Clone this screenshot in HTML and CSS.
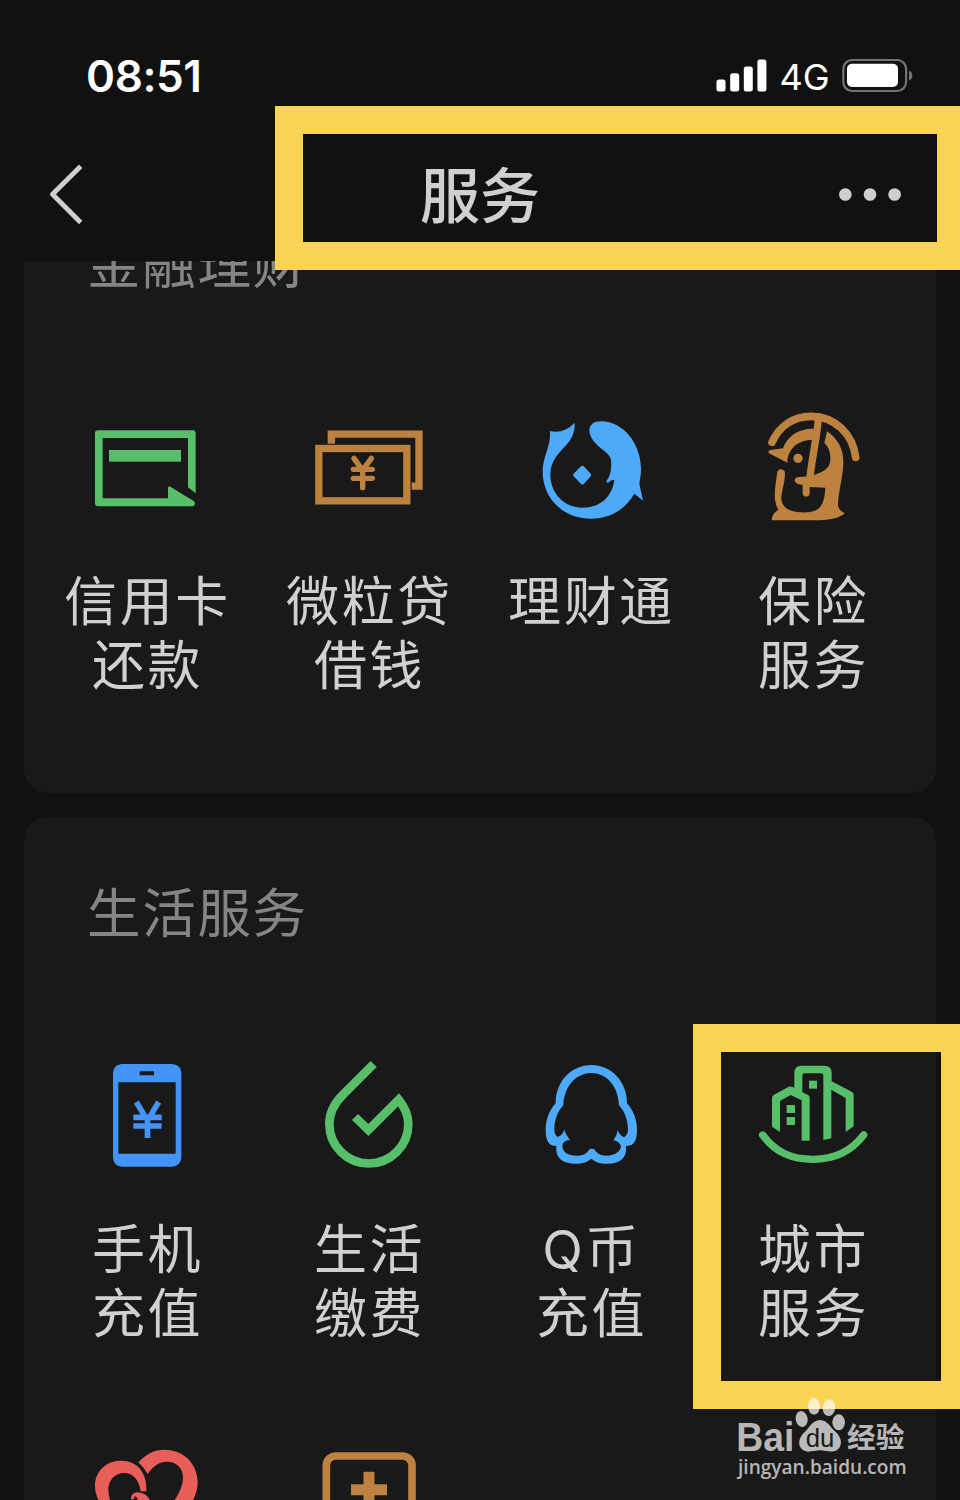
FILE: index.html
```html
<!DOCTYPE html>
<html lang="zh-CN">
<head>
    <meta charset="UTF-8">
    <meta name="viewport" content="width=device-width, initial-scale=1.0">
    <title>服务</title>
    <link rel="stylesheet" href="styles.css">
</head>
<body>
    <div class="screen">
        <header class="header">
            <div class="status-bar">
                <span class="time">08:51</span>
                <div class="status-icons">
                    <svg class="signal" viewBox="0 0 51 34" fill="#fff">
                        <rect x="0.5" y="20.5" width="9" height="12" rx="2.5"/>
                        <rect x="14.2" y="14.2" width="9" height="18.3" rx="2.5"/>
                        <rect x="27.8" y="7.4" width="9" height="25.1" rx="2.5"/>
                        <rect x="41.4" y="0.6" width="9" height="31.9" rx="2.5"/>
                    </svg>
                    <span class="network">4G</span>
                    <svg class="battery" viewBox="0 0 72 34">
                        <rect x="1.3" y="1" width="62.8" height="31" rx="9" fill="none" stroke="#737373" stroke-width="2.2"/>
                        <rect x="5" y="4.800" width="51" height="23.2" rx="5" fill="#fff"/>
                        <path d="M67 11.8Q70.3 13 70.3 16.5T67 21.8Z" fill="#737373"/>
                    </svg>
                </div>
            </div>
            <nav class="nav-bar">
                <svg class="back" viewBox="0 0 40 64">
                    <path d="M34.700 4.300L6.500 32.300L34.700 60.500" fill="none" stroke="#cfcfcf" stroke-width="4.8" stroke-linejoin="round"/>
                </svg>
                <h1>服务</h1>
                <svg class="more" viewBox="0 0 64 14" fill="#cfcfcf">
                    <circle cx="7.3" cy="7.500" r="6.3"/>
                    <circle cx="32" cy="7.500" r="6.3"/>
                    <circle cx="56.6" cy="7.500" r="6.3"/>
                </svg>
            </nav>
        </header>

        <main class="content">
            <section class="card card-finance">
                <h2>金融理财</h2>
                <div class="grid">
                    <div class="item">
                        <svg class="icon" viewBox="6 -30 390 390" fill="#57bf6a">
                            <path d="M54 61H339Q347 61 347 69V250L324 232V84H68V265H264V234Q264 226 271 230L341 273Q347 277 345 283Q343 289 337 289H54Q45 289 45 280V70Q45 61 54 61Z"/>
                            <rect x="87" y="120" width="216" height="35"/>
                        </svg>
                        <p>信用卡<br>还款</p>
                    </div>
                    <div class="item">
                        <svg class="icon" viewBox="672 -30 390 390" fill="none" stroke="#bd8140">
                            <rect x="716.5" y="115.5" width="264" height="157" stroke-width="22"/>
                            <path d="M754 101V72.5H1017V228.5H995" stroke-width="22"/>
                            <path d="M822 145L848 181L874 145M820 178H877M820 205H877M848 180V233" stroke-width="16" stroke-linecap="round"/>
                        </svg>
                        <p>微粒贷<br>借钱</p>
                    </div>
                    <div class="item">
                        <svg class="icon" viewBox="-12 0 390 390" fill="#4eaaf9">
                            <path d="M59 93Q103 102 134 68Q137 105 107 137C83 162 62 184 61 222C61 282 104 323 157 323C211 323 247 290 253 239Q243 239 233 249L229 244Q247 221 243 180Q240 166 224 154C195 133 178 111 178 91C178 74 192 64 214 64C278 64 333 130 333 207C333 224 330 239 328 251L339 302L313 281C286 328 241 356 183 356C103 356 38 300 38 214C38 168 66 130 59 93Z"/>
                            <path d="M157 197Q159 197 161 199L182 221Q185 225 182 229L161 252Q157 255 153 252L131 229Q127 225 131 221L153 199Q155 197 157 197Z"/>
                        </svg>
                        <p>理财通</p>
                    </div>
                    <div class="item">
                        <svg class="icon" viewBox="-6 0 390 390" fill="#bd8140">
                            <path d="M66 127C88 77 131 49 184 49C255 49 309 104 317 172" fill="none" stroke="#bd8140" stroke-width="23" stroke-linecap="round"/>
                            <path d="M205 58C201 110 187 166 179 240" fill="none" stroke="#bd8140" stroke-width="22"/>
                            <path d="M191 86C145 85 112 108 99 145L62 150Q52 153 57 160L112 188C113 147 143 120 188 119Z"/>
                            <circle cx="144" cy="175" r="14"/>
                            <path d="M231 94C264 116 281 149 280 188C279 230 266 270 264 312C264 329 275 333 284 340C278 349 246 361 209 361H65Q66 339 85 329C67 302 76 257 82 215Q85 207 94 208Q105 209 105 221C104 252 93 282 94 297C97 323 119 335 149 337C185 339 203 332 213 317C223 302 225 280 226 263L179 261V281Q177 290 168 290Q158 289 158 279V255L144 252Q134 248 134 241Q135 230 150 231L187 227C218 217 236 207 240 187C244 163 236 140 223 129Z"/>
                        </svg>
                        <p>保险<br>服务</p>
                    </div>
                </div>
            </section>

            <section class="card card-life">
                <h2>生活服务</h2>
                <div class="grid">
                    <div class="item">
                        <svg class="icon" viewBox="-24 0 390 390" fill="#4493f7">
                            <path fill-rule="evenodd" d="M95 42H247Q274 45 274 69V323Q272 347 247 350H95Q70 347 69 323V69Q70 45 95 42ZM149 64V76H192V64ZM85 97V311H257V97Z"/>
                            <path d="M139 156L167 203M206 156L178 203M130 202H215M130 228H215M172.500 198V264" fill="none" stroke="#4493f7" stroke-width="17"/>
                        </svg>
                        <p>手机<br>充值</p>
                    </div>
                    <div class="item">
                        <svg class="icon" viewBox="642 0 390 390" fill="none" stroke="#57bf6a" stroke-width="26">
                            <path d="M851 42L757 136C731 162 718 188 718 222A118.500 118.500 0 0 0 955 222C955 194 943 170 926 149L835 240L795 201"/>
                        </svg>
                        <p>生活<br>缴费</p>
                    </div>
                    <div class="item">
                        <svg class="icon" viewBox="-12 0 390 390" fill="#4eaaf9">
                            <path fill-rule="evenodd" d="M184 45C244 45 291 94 291 160C309 180 321 208 321 239C321 268 314 288 288 288C292 323 271 341 232 341C211 341 197 337 184 326C171 337 156 341 137 341C97 341 75 323 79 288C55 288 47 270 47 239C47 208 59 180 77 160C77 94 124 45 184 45ZM184 69C137 69 102 110 100 166C82 185 73 210 73 238C73 250 77 257 83 261Q99 256 103 238Q106 253 120 270Q99 271 97 287C98 306 113 317 141 317C161 317 171 310 178 298Q185 295 193 298C200 310 211 317 230 317C255 317 272 304 273 289Q269 274 250 270Q263 254 262 239Q268 255 282 262C291 257 294 248 294 238C294 209 283 183 267 166C265 110 231 69 184 69Z"/>
                        </svg>
                        <p>Q币<br>充值</p>
                    </div>
                    <div class="item">
                        <svg class="icon" viewBox="24 0 390 390" fill="#57bf6a">
                            <path d="M68 255C107 308 155 328 219 328C283 328 332 306 371 255" fill="none" stroke="#57bf6a" stroke-width="22" stroke-linecap="round"/>
                            <path d="M96 144Q96 137 102 134L145 111Q152 107 160 112L163 113V69Q163 47 184 47H253Q275 47 275 69V94L335 125Q341 128 341 135V229L317 246V144L274 119V265L250 270V77Q250 70 243 70H194Q187 70 187 77V127L203 134Q209 137 209 144V272H185V151L152 135L120 153V246L96 230Z"/>
                            <rect x="207" y="92" width="24" height="24"/>
                            <rect x="140" y="165" width="25" height="24"/>
                            <rect x="140" y="201" width="25" height="24"/>
                        </svg>
                        <p>城市<br>服务</p>
                    </div>
                    <div class="item">
                        <svg class="icon" viewBox="6 0 390 390" fill="#e85e59">
                            <path d="M175 97C198 72 222 59 254 59C311 59 353 101 353 157C353 229 278 285 199 330L188 303C250 255 309 199 309 142C309 113 288 95 262 95C237 95 219 108 203 132Q192 113 175 97Z"/>
                            <path d="M199 184H182C177 149 159 129 133 129C105 129 85 150 85 179Q85 195 91 211L199 330C112 285 45 230 45 167C45 123 79 92 123 92C174 92 202 130 199 184Z"/>
                            <path d="M153 208Q152 190 171 187C193 188 207 199 211 215L179 230L163 217L174 205L163 198V207Z"/>
                        </svg>
                    </div>
                    <div class="item">
                        <svg class="icon" viewBox="672 0 390 390" fill="none" stroke="#bd8140">
                            <rect x="739" y="78" width="257" height="257" rx="28" stroke-width="23"/>
                            <path d="M867 125V233M813 179H921" stroke-width="33"/>
                        </svg>
                    </div>
                </div>
            </section>
        </main>

        <div class="mark mark-title"></div>
        <div class="mark mark-city"></div>

        <svg class="watermark" viewBox="0 0 660 360">
            <g fill="#fff" fill-opacity="0.7">
                <text class="wm-bai" x="49" y="213" textLength="174" lengthAdjust="spacingAndGlyphs">Bai</text>
                <ellipse cx="245" cy="117" rx="18" ry="24" transform="rotate(-10 245 117)"/>
                <ellipse cx="282" cy="79" rx="18" ry="25"/>
                <ellipse cx="327" cy="83" rx="19" ry="25" transform="rotate(8 327 83)"/>
                <ellipse cx="356" cy="127" rx="19" ry="24"/>
                <path d="M300 120C323 121 331 142 345 154C361 168 368 187 359 202C345 224 321 211 300 211C279 211 258 223 243 205C232 189 239 169 255 155C269 143 276 121 300 120Z"/>
                <text class="wm-name" x="381" y="204" textLength="172" lengthAdjust="spacingAndGlyphs">经验</text>
                <text class="wm-url" x="54" y="281" textLength="506" lengthAdjust="spacingAndGlyphs">jingyan.baidu.com</text>
            </g>
            <text class="wm-du" x="257" y="201" textLength="86" lengthAdjust="spacingAndGlyphs">du</text>
        </svg>
    </div>
</body>
</html>
```
FILE: styles.css
```css
* {
    box-sizing: border-box;
}
body {
    margin: 0;
    background: #111;
    color: #d0d0d0;
    font-family: Inter, "Noto Sans CJK SC", sans-serif;
}
h1, h2, p {
    margin: 0;
    font-weight: 400;
}
svg {
    display: block;
    flex: none;
}
.screen {
    position: relative;
    display: flex;
    flex-direction: column;
    width: 960px;
    height: 1500px;
    overflow: hidden;
    background: #111;
}

/* header */
.header {
    flex: none;
    height: 261px;
}
.status-bar {
    display: flex;
    align-items: center;
    justify-content: space-between;
    height: 127px;
    padding: 25px 46px 0 86px;
}
.time {
    color: #fff;
    font-size: 44px;
    font-weight: 600;
    letter-spacing: -0.4px;
}
.status-icons {
    display: flex;
    align-items: center;
}
.signal {
    width: 51px;
    height: 34px;
}
.network {
    width: 75px;
    padding-top: 1px;
    color: #fff;
    font-size: 36px;
    text-align: center;
}
.battery {
    width: 72px;
    height: 34px;
}
.nav-bar {
    display: grid;
    grid-template-columns: 1fr auto 1fr;
    align-items: center;
    height: 134px;
    padding: 0 58px 0 46px;
}
.back {
    width: 40px;
    height: 64px;
}
.nav-bar h1 {
    padding: 4px 0 0 12px;
    font-size: 60px;
    font-weight: 500;
    line-height: 80px;
}
.more {
    width: 64px;
    height: 14px;
    justify-self: end;
}

/* service cards */
.content {
    flex: 1;
    min-height: 0;
    padding: 0 24px;
    overflow: hidden;
}
.card {
    height: 720px;
    padding: 57px 12px 0;
    border-radius: 24px;
    background: #191919;
}
.card-finance {
    height: 625px;
    margin: -93px 0 24px;
}
.card h2 {
    padding-left: 51px;
    color: #858585;
    font-size: 53.5px;
    line-height: 80px;
    letter-spacing: 1.7px;
}
.grid {
    display: grid;
    grid-template-columns: repeat(4, 222px);
    row-gap: 84px;
    padding-top: 96px;
}
.card-finance .grid {
    padding-top: 95px;
}
.item {
    display: flex;
    flex-direction: column;
    align-items: center;
}
.icon {
    width: 130px;
    height: 130px;
}
.item p {
    margin-top: 40px;
    padding-left: 1px;
    font-size: 53px;
    line-height: 64px;
    letter-spacing: 2.6px;
    text-align: center;
}
.card-life .item p {
    margin-top: 38px;
}

/* yellow highlight frames */
.mark {
    position: absolute;
    border: 28px solid #f8d354;
}
.mark-title {
    left: 275px;
    top: 105.5px;
    width: 690px;
    height: 164px;
}
.mark-city {
    left: 693px;
    top: 1024px;
    width: 276px;
    height: 385px;
}

/* watermark */
.watermark {
    position: absolute;
    left: 720px;
    top: 1380px;
    width: 220px;
    height: 120px;
}
.wm-bai {
    font: 700 122px "Liberation Sans", sans-serif;
}
.wm-name {
    font: 700 86px "Noto Sans CJK SC", sans-serif;
}
.wm-url {
    font: 600 60px "Open Sans", sans-serif;
}
.wm-du {
    fill: #191919;
    font: 400 76px "Liberation Sans", sans-serif;
}
```
